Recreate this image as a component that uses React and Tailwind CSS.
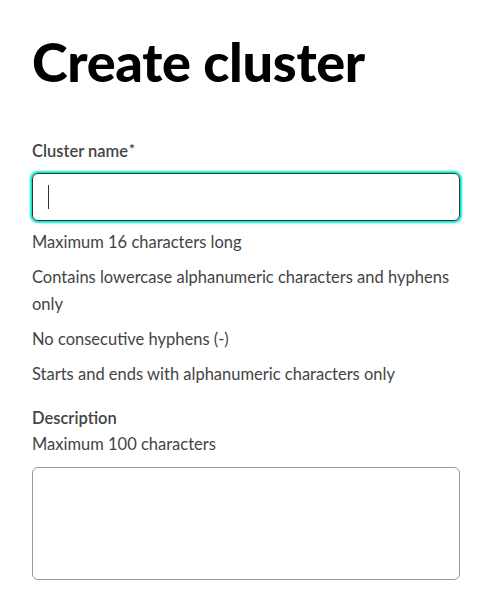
export default function App() {
  return (
    <div className="min-h-[601px] w-[492px] bg-white px-8 pt-[29px] font-['Lato',sans-serif] text-[#444444]">
      <h1 className="text-[54px] font-black leading-[66px] text-black tracking-[-0.3px]">Create cluster</h1>
      <div className="mt-[44px]">
        <label className="block text-[16.5px] font-semibold leading-[24px]">
          Cluster name<sup className="text-[14px] text-[#333333] relative top-[-3px] ml-px">*</sup>
        </label>
        <div className="mt-[10px] h-[48px] rounded-[6px] border border-[#333333] shadow-[0_0_2px_2px_#00e8cf] flex items-center px-[15px]">
          <div className="h-[24px] w-px bg-[#333333]" />
        </div>
        <div className="mt-[8px] text-[16.5px] leading-[27px] flex flex-col gap-[8px]">
          <p>Maximum 16 characters long</p>
          <p>Contains lowercase alphanumeric characters and hyphens only</p>
          <p>No consecutive hyphens (-)</p>
          <p>Starts and ends with alphanumeric characters only</p>
        </div>
        <div className="mt-[17px]">
          <label className="block text-[16.5px] font-semibold leading-[26px]">Description</label>
          <p className="text-[16.5px] leading-[27px]">Maximum 100 characters</p>
          <div className="mt-[9px] h-[113px] rounded-[6px] border border-[#999999]" />
        </div>
      </div>
    </div>
  );
}
